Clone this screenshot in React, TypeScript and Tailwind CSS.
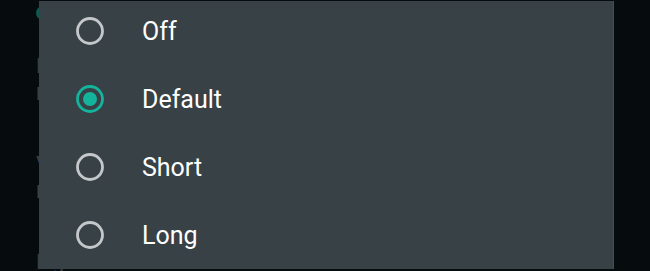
import React, { useState } from "react";

const options = ["Off", "Default", "Short", "Long"];

const Radio = ({ checked }: { checked: boolean }) => (
  <svg width="30" height="30" viewBox="0 0 30 30" className="shrink-0">
    <circle
      cx="15"
      cy="15"
      r="12.5"
      fill="none"
      stroke={checked ? "#14b39c" : "#c5c8ca"}
      strokeWidth="2.8"
    />
    {checked && <circle cx="15" cy="15" r="7" fill="#14b39c" />}
  </svg>
);

export default function App() {
  const [selected, setSelected] = useState("Default");

  return (
    <div
      className="relative w-[650px] h-[271px] overflow-hidden bg-[#060b0d]"
      style={{ fontFamily: "Roboto, 'Noto Sans', sans-serif" }}
    >
      {/* settings page behind the dialog, dimmed by the scrim */}
      <div className="flex flex-col pl-[36px] text-[#3b4145]">
        <div className="h-[24px] pt-[6px]">
          <div className="w-[14px] h-[14px] rounded-full border-[3px] border-[#0e5a50]" />
        </div>
        <div className="mt-[30px] text-[21px] leading-[24px]">Notifications</div>
        <div className="mt-[6px] text-[18px] leading-[20px]">Default</div>
        <div className="mt-[48px] text-[21px] leading-[24px]">Vibrate</div>
        <div className="mt-[6px] text-[18px] leading-[20px]">Default</div>
        <div className="mt-[48px] text-[21px] leading-[24px]">Light</div>
      </div>

      {/* dialog */}
      <div className="absolute left-[39px] top-[1px] w-[575px] h-[268px] bg-[#374146] border-r border-[#444e53] overflow-hidden">
        <div className="flex flex-col -mt-[4px]">
          {options.map((opt) => (
            <button
              key={opt}
              onClick={() => setSelected(opt)}
              className="flex items-center h-[68px] pl-[36px] text-left"
            >
              <Radio checked={selected === opt} />
              <span className="ml-[37px] text-[25px] text-white leading-none">
                {opt}
              </span>
            </button>
          ))}
        </div>
      </div>
    </div>
  );
}
